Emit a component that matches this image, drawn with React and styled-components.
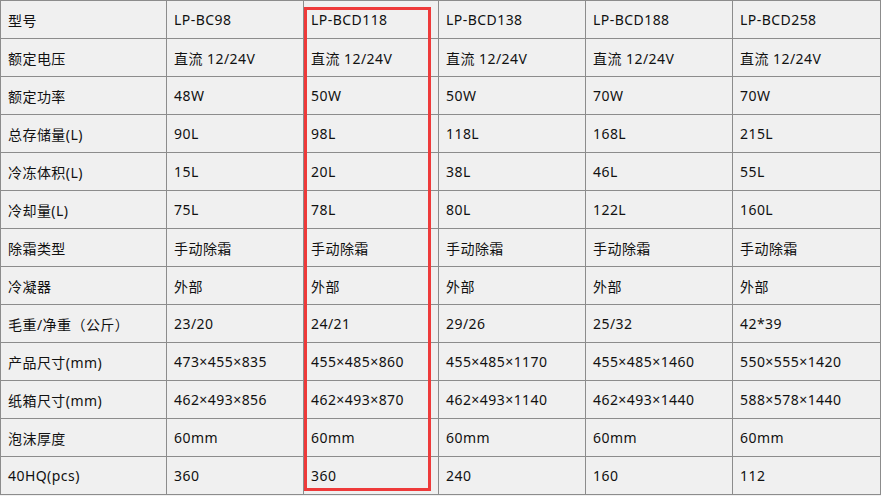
import React from 'react';
import styled, { createGlobalStyle } from 'styled-components';

const rows = [
    ['型号', 'LP-BC98', 'LP-BCD118', 'LP-BCD138', 'LP-BCD188', 'LP-BCD258'],
    ['额定电压', '直流 12/24V', '直流 12/24V', '直流 12/24V', '直流 12/24V', '直流 12/24V'],
    ['额定功率', '48W', '50W', '50W', '70W', '70W'],
    ['总存储量(L)', '90L', '98L', '118L', '168L', '215L'],
    ['冷冻体积(L)', '15L', '20L', '38L', '46L', '55L'],
    ['冷却量(L)', '75L', '78L', '80L', '122L', '160L'],
    ['除霜类型', '手动除霜', '手动除霜', '手动除霜', '手动除霜', '手动除霜'],
    ['冷凝器', '外部', '外部', '外部', '外部', '外部'],
    ['毛重/净重（公斤）', '23/20', '24/21', '29/26', '25/32', '42*39'],
    ['产品尺寸(mm)', '473×455×835', '455×485×860', '455×485×1170', '455×485×1460', '550×555×1420'],
    ['纸箱尺寸(mm)', '462×493×856', '462×493×870', '462×493×1140', '462×493×1440', '588×578×1440'],
    ['泡沫厚度', '60mm', '60mm', '60mm', '60mm', '60mm'],
    ['40HQ(pcs)', '360', '360', '240', '160', '112'],
];

const colWidths = [166, 137, 135, 147, 147, 148];

function App() {
    return (
        <>
            <GlobalStyle />
            <Wrap>
                <SpecTable>
                    <colgroup>
                        {colWidths.map((w, i) => <col key={i} style={{ width: w }} />)}
                    </colgroup>
                    <tbody>
                        {rows.map((row, r) => (
                            <Row key={r}>
                                {row.map((cell, c) => (
                                    <Cell key={c}>{cell}</Cell>
                                ))}
                            </Row>
                        ))}
                    </tbody>
                </SpecTable>
                {/* 红框标注 LP-BCD118 */}
                <Highlight />
            </Wrap>
        </>
    );
}

export default App;

// Styled-components

const GlobalStyle = createGlobalStyle`
    body {
        margin: 0;
        background: #f0f0f0;
        font-family: "Noto Sans", "Noto Sans CJK SC", sans-serif;
    }
`;

const Wrap = styled.div`
    position: relative;
    width: 881px;
`;

const SpecTable = styled.table`
    width: 880px;
    table-layout: fixed;
    border-collapse: collapse;
    background: #f0f0f0;
    border: 1px solid #4a4a4a;
`;

const Row = styled.tr`
    height: 38px;
`;

const Cell = styled.td`
    padding: 0 0 0 7px;
    border: 1px solid #8c8c8c;
    font-size: 14px;
    letter-spacing: 0.45px;
    color: #111;
    white-space: nowrap;
    vertical-align: middle;
`;

const Highlight = styled.div`
    position: absolute;
    left: 304px;
    top: 7px;
    width: 127px;
    height: 484px;
    box-sizing: border-box;
    border: 3px solid #ee3a3a;
    pointer-events: none;
`;
